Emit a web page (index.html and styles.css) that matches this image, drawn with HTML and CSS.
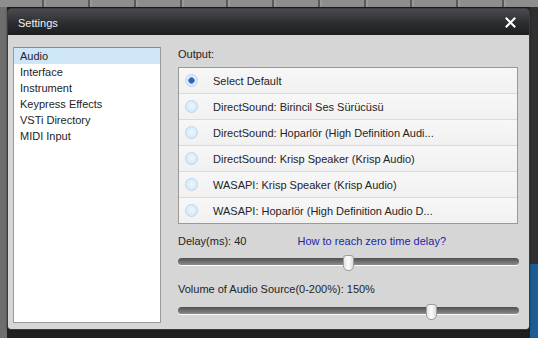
FILE: index.html
```html
<!DOCTYPE html>
<html lang="en">
<head>
<meta charset="UTF-8">
<title>Settings</title>
<link rel="stylesheet" href="styles.css">
</head>
<body>

<!-- ダイアログ本体 -->
<div class="window">
  <div class="titlebar">
    <span class="title">Settings</span>
    <svg class="close" width="11" height="11" viewBox="0 0 11 11">
      <path d="M1.5 1.5 L9.5 9.5 M9.5 1.5 L1.5 9.5" stroke="#fff" stroke-width="2" stroke-linecap="square"/>
    </svg>
  </div>

  <div class="content">
    <!-- 左のメニュー -->
    <ul class="nav">
      <li class="active">Audio</li>
      <li>Interface</li>
      <li>Instrument</li>
      <li>Keypress Effects</li>
      <li>VSTi Directory</li>
      <li>MIDI Input</li>
    </ul>

    <!-- 右のパネル -->
    <div class="panel">
      <div class="label">Output:</div>
      <ul class="devices">
        <li><span class="radio checked"></span>Select Default</li>
        <li><span class="radio"></span>DirectSound: Birincil Ses Sürücüsü</li>
        <li><span class="radio"></span>DirectSound: Hoparlör (High Definition Audi...</li>
        <li><span class="radio"></span>DirectSound: Krisp Speaker (Krisp Audio)</li>
        <li><span class="radio"></span>WASAPI: Krisp Speaker (Krisp Audio)</li>
        <li><span class="radio"></span>WASAPI: Hoparlör (High Definition Audio D...</li>
      </ul>

      <div class="delay-row">
        <span>Delay(ms): 40</span>
        <a class="help" href="#">How to reach zero time delay?</a>
      </div>
      <input type="range" class="slider" id="delay" min="0" max="80" value="40">

      <div class="volume-row">Volume of Audio Source(0-200%): 150%</div>
      <input type="range" class="slider" id="volume" min="0" max="200" value="150">
    </div>
  </div>
</div>

</body>
</html>
```

FILE: styles.css
```css
body {
  margin: 0;
  width: 538px;
  height: 338px;
  overflow: hidden;
  padding: 8px 8px 0 7px;
  box-sizing: border-box;
  font-family: "Liberation Sans", Arial, sans-serif;
  font-size: 11px;
  color: #242424;
  /* 背景のアプリ画面（ダイアログの後ろ） */
  background:
    repeating-linear-gradient(90deg, #8e8e8e 0 42px, #5a5a5a 42px 44px, #9a9a9a 44px 46px) top left / 100% 7px no-repeat,
    linear-gradient(90deg, #6e6e6e 0 7px, transparent 7px),
    linear-gradient(#2e3032 0 78%, #1d5d93 78% 100%) right top / 8px 100% no-repeat,
    #1e1f21;
}

.window {
  width: 523px;
  height: 322px;
  box-sizing: border-box;
  border: 1px solid #3c3c3c;
  border-radius: 4px;
  overflow: hidden;
  display: flex;
  flex-direction: column;
  box-shadow: 0 0 2px rgba(0, 0, 0, 0.6);
}

.titlebar {
  height: 26px;
  flex: none;
  display: flex;
  align-items: center;
  justify-content: space-between;
  padding: 0 13px 0 10px;
  background: linear-gradient(#4a4c50, #2c2d31 55%, #1d1e21);
}

.title {
  color: #f2f2f2;
  font-size: 11px;
  margin-top: 1px;
}

.close {
  display: block;
  margin-top: 1px;
}

.content {
  flex: 1;
  display: flex;
  gap: 17px;
  padding: 12px 10px 7px 5px;
  background: #d6d6d6;
}

/* 左メニュー */
.nav {
  list-style: none;
  margin: 0;
  padding: 0;
  width: 148px;
  height: 276px;
  box-sizing: border-box;
  background: #fff;
  border: 1px solid #9b9b9b;
  border-top-color: #8a8a8a;
}

.nav li {
  height: 16px;
  line-height: 17px;
  padding-left: 6px;
}

.nav li.active {
  background: #cfe5f8;
}

/* 右パネル */
.panel {
  width: 341px;
  display: flex;
  flex-direction: column;
}

.label {
  line-height: 14px;
  height: 14px;
}

.devices {
  list-style: none;
  margin: 6px 0 0;
  padding: 0;
  width: 340px;
  box-sizing: border-box;
  border: 1px solid #9a9a9a;
  background: #f4f4f4;
}

.devices li {
  height: 26px;
  box-sizing: border-box;
  display: flex;
  align-items: center;
  padding-left: 6px;
  border-top: 1px solid #d9d9d9;
  background: linear-gradient(#f7f7f7, #f1f1f1);
}

.devices li:first-child {
  border-top: none;
  height: 25px;
}

.radio {
  width: 13px;
  height: 13px;
  box-sizing: border-box;
  border-radius: 50%;
  margin-right: 15px;
  border: 1px solid #bcd6ea;
  background: radial-gradient(circle at 50% 45%, #eef7fd 0, #d4eaf9 70%, #c3def3 100%);
}

.radio.checked {
  background:
    radial-gradient(circle at 50% 50%, #2b63b8 0 2px, #5f93d6 3px, transparent 3.6px),
    radial-gradient(circle at 50% 45%, #eef7fd 0, #d4eaf9 70%, #c3def3 100%);
}

.delay-row {
  display: flex;
  margin-top: 10px;
  line-height: 14px;
}

.help {
  margin-left: 51px;
  color: #2024ad;
  text-decoration: none;
}

.volume-row {
  margin-top: 13px;
  line-height: 14px;
}

/* スライダー */
.slider {
  -webkit-appearance: none;
  appearance: none;
  width: 341px;
  height: 16px;
  margin: 5px 0 0;
  padding: 0;
  background: transparent;
}

#volume {
  margin-top: 6px;
}

.slider::-webkit-slider-runnable-track {
  height: 7px;
  border-radius: 4px;
  background: linear-gradient(#4f4f4f, #6e6e6e 50%, #8c8c8c);
  box-shadow: 0 1px 0 #fbfbfb;
}

.slider::-webkit-slider-thumb {
  -webkit-appearance: none;
  appearance: none;
  width: 11px;
  height: 16px;
  margin-top: -3px;
  box-sizing: border-box;
  border: 1px solid #9d9d9d;
  border-radius: 3px 3px 5px 5px;
  background: linear-gradient(90deg, #e6e6e6, #fbfbfb 50%, #dcdcdc);
}
```
